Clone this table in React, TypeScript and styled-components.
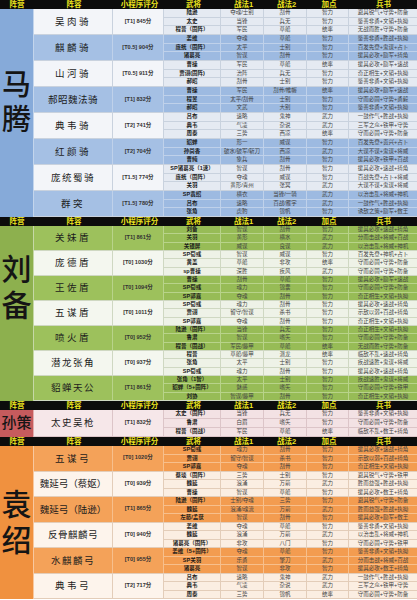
import React from 'react';
import styled, { createGlobalStyle } from 'styled-components';

const GlobalStyle = createGlobalStyle`
  html, body {
    margin: 0;
    padding: 0;
    background: #ffffff;
  }
  body {
    font-family: 'Noto Sans CJK SC', 'Noto Sans', sans-serif;
    color: #222;
  }
`;

type Row = [string, string, string, string, string];

interface Group {
  name: string;
  score: string;
  rows: Row[];
}

interface Faction {
  title: string[];
  titleSize: number;
  titleLift: number;
  groupHeight: number;
  side: string;
  light: string;
  lightCell: string;
  dark: string;
  darkCell: string;
  lightLine: string;
  darkLine: string;
  startDark: boolean;
  groups: Group[];
}

const factions: Faction[] = [
  {
    title: ['马', '腾'],
    titleSize: 29,
    titleLift: 20,
    groupHeight: 26,
    side: '#86aad9',
    light: '#f3f5f9',
    lightCell: '#e5eaf2',
    dark: '#a5c0e4',
    darkCell: '#9dbae1',
    lightLine: '#c9d2de',
    darkLine: '#bfd1ea',
    startDark: false,
    groups: [
      {
        name: '吴肉骑',
        score: '[T1] 845分',
        rows: [
          ['陆逊', '夺魂/士别', '刮骨', '智力', '避其锐气+守势+防备'],
          ['太史', '当锋', '兵无', '智力', '鉴善非勇+文韬+执拗'],
          ['程普（固阵）', '军民', '草船', '统率', '无战而胜+守势+防备'],
        ],
      },
      {
        name: '麒麟骑',
        score: '[T0.5] 904分',
        rows: [
          ['姜维', '夺魂', '草船', '智力', '鉴善非勇+胜战+执拗'],
          ['庞统（固阵）', '太平', '士别', '智力', '百发先登+鬼谋+占卜'],
          ['诸葛亮', '智谋', '刮骨', '智力', '援其必攻+励军+掎角'],
        ],
      },
      {
        name: '山河骑',
        score: '[T0.5] 911分',
        rows: [
          ['曹操', '军民', '草船', '统率', '援其必攻+励军+速战'],
          ['贾诩(固阵)', '治阵', '兵无', '智力', '奇正相生+文韬+执拗'],
          ['郝昭', '刮骨', '士别', '智力', '鉴善非勇+文韬+执拗'],
        ],
      },
      {
        name: '郝昭魏法骑',
        score: '[T1] 832分',
        rows: [
          ['曹操', '军民', '刮骨/帷幄', '统率', '援其必攻+励军+速战'],
          ['程昱', '太平/刮骨', '士别', '智力', '守而必固+守势+勇毅'],
          ['郝昭', '文武', '大别', '智力', '鉴善非勇+文韬+执拗'],
        ],
      },
      {
        name: '典韦骑',
        score: '[T2] 741分',
        rows: [
          ['吕布', '速略', '鬼神', '武力', '一鼓作气+胜战+执拗'],
          ['典韦', '气凌', '杂说', '武力', '三军之众+铁甲+守势'],
          ['周泰', '三势', '西凉', '统率', '守而必固+守势+防备'],
        ],
      },
      {
        name: '红颜骑',
        score: '[T2] 704分',
        rows: [
          ['貂蝉', '形一', '威谋', '智力', '百发先登+贵兴+占卜'],
          ['孙尚香', '破水/破军/斩刀', '西凉', '武力', '大谋不谋+鬼谋+将威'],
          ['曹纯', '象兵', '刮骨', '智力', '援其必攻+铁甲+百战'],
        ],
      },
      {
        name: '庞统蜀骑',
        score: '[T1.5] 774分',
        rows: [
          ['SP诸葛亮（1速）', '智谋', '刮骨', '智力', '援其必攻+速战+掎角'],
          ['庞统（固阵）', '夺魂', '威谋', '智力', '百战先登+占卜+将威'],
          ['关羽', '黄形/青州', '张冥', '武力', '大谋不谋+鬼谋+将威'],
        ],
      },
      {
        name: '群突',
        score: '[T1.5] 780分',
        rows: [
          ['SP袁绍', '横衣', '当锋/一骑', '武力', '以治击乱+将威+神机'],
          ['吕布', '速略', '百战/雁字', '武力', '一鼓作气+胜战+执拗'],
          ['张角', '虎豹', '锦帆', '智力', '诱敌之策+励军+数王'],
        ],
      },
    ],
  },
  {
    title: ['刘', '备'],
    titleSize: 30,
    titleLift: 52,
    groupHeight: 25,
    side: '#8db04e',
    light: '#f4f7ef',
    lightCell: '#eef2e7',
    dark: '#9dc15c',
    darkCell: '#97bc56',
    lightLine: '#cfd8c2',
    darkLine: '#b8d38a',
    startDark: true,
    groups: [
      {
        name: '关妹盾',
        score: '[T1] 861分',
        rows: [
          ['刘备', '智谋', '刮骨', '智力', '援其必攻+速战+掎角'],
          ['关羽', '黄形', '横水', '武力', '分而击战+将威+百战'],
          ['关银屏', '威谋', '良谋', '武力', '以治击乱+将威+神机'],
        ],
      },
      {
        name: '庞德盾',
        score: '[T0] 1030分',
        rows: [
          ['SP荀彧', '智谋', '威谋', '智力', '百发先登+神机+占卜'],
          ['黄盖', '草船', '非攻', '统率', '守而必固+守势+防备'],
          ['sp曹操', '深胜', '疾风', '武力', '守而必固+守势+防备'],
        ],
      },
      {
        name: '王佐盾',
        score: '[T0] 1094分',
        rows: [
          ['曹操', '刮骨', '草船', '智力', '援其必攻+励军+速战'],
          ['SP荀彧', '魂力', '锦囊', '智力', '守而必固+守势+防备'],
          ['SP郭嘉', '夺魂', '刮骨', '智力', '奇正相生+文韬+执拗'],
        ],
      },
      {
        name: '五谋盾',
        score: '[T0] 1011分',
        rows: [
          ['SP荀彧', '魂力', '刮骨', '智力', '援其必攻+速战+掎角'],
          ['贾诩', '留守/智谋', '杀书', '智力', '示敌以弱+百战+掎角'],
          ['SP郭嘉', '夺魂', '刮骨', '智力', '奇正相生+文韬+执拗'],
        ],
      },
      {
        name: '喷火盾',
        score: '[T0] 952分',
        rows: [
          ['陆逊（固阵）', '当锋', '兵无', '智力', '奇正相生+文韬+执拗'],
          ['鲁肃', '智谋', '嗜矢', '智力', '守而必固+守势+防备'],
          ['程普（固战）', '军民/藤甲', '草船', '统率', '无战而胜+守势+防备'],
        ],
      },
      {
        name: '潜龙张角',
        score: '[T0] 937分',
        rows: [
          ['程普', '草船/藤甲', '潜龙', '统率', '临敌不乱+速战+掎角'],
          ['张角', '太平', '士别', '智力', '疾战速胜+鬼谋+将威'],
          ['SP荀彧', '魂力', '刮骨', '智力', '援其必攻+速战+掎角'],
        ],
      },
      {
        name: '貂蝉天公',
        score: '[T1] 861分',
        rows: [
          ['张角（1智）', '太平', '士别', '智力', '疾战速胜+鬼谋+将威'],
          ['貂蝉（5+固阵）', '魅惑', '嗜矢', '智力', '守而必固+守势+铁甲'],
          ['刘协', '智谋/藤甲', '刮骨', '智力', '奇正相生+文韬+执拗'],
        ],
      },
    ],
  },
  {
    title: ['孙策'],
    titleSize: 15,
    titleLift: 0,
    groupHeight: 27,
    side: '#c65b5d',
    light: '#f6e7e9',
    lightCell: '#f3e2e4',
    dark: '#f6e7e9',
    darkCell: '#f3e2e4',
    lightLine: '#dcc5c8',
    darkLine: '#dcc5c8',
    startDark: false,
    groups: [
      {
        name: '太史吴枪',
        score: '[T1] 832分',
        rows: [
          ['太史（固阵）', '当锋', '兵无', '智力', '鉴善非勇+文韬+执拗'],
          ['鲁肃', '白眉', '嗜矢', '智力', '守而必固+守势+防备'],
          ['程普（固战）', '军民', '草船', '统率', '临敌不乱+数王+掎角'],
        ],
      },
    ],
  },
  {
    title: ['袁', '绍'],
    titleSize: 30,
    titleLift: 0,
    groupHeight: 25.5,
    side: '#f0913f',
    light: '#fdf4ec',
    lightCell: '#fbeee2',
    dark: '#f4a259',
    darkCell: '#f39c50',
    lightLine: '#e3cdb9',
    darkLine: '#f7bf8c',
    startDark: true,
    groups: [
      {
        name: '五谋弓',
        score: '[T0] 1020分',
        rows: [
          ['SP荀彧', '魂力', '刮骨', '智力', '援其必攻+速战+掎角'],
          ['贾诩', '留守/智谋', '杀书', '智力', '示敌以弱+百战+掎角'],
          ['SP郭嘉', '夺魂', '刮骨', '智力', '奇正相生+文韬+执拗'],
        ],
      },
      {
        name: '魏延弓（蔡妪）',
        score: '[T0] 939分',
        rows: [
          ['蔡琰（固阵）', '三势', '士别', '智力', '避其锐气+守势+铁甲'],
          ['魏延', '浪涌', '万箭', '武力', '胜而益强+胜战+执拗'],
          ['曹操', '智谋', '草船', '智力', '援其必攻+数王+掎角'],
        ],
      },
      {
        name: '魏延弓（陆逊）',
        score: '[T1] 865分',
        rows: [
          ['陆逊（固阵）', '士别/夺魂', '三势', '智力', '避其锐气+守势+防备'],
          ['魏延', '浪涌/魂流', '万箭', '武力', '胜而益强+胜战+执拗'],
          ['左慈/孟获', '智谋', '刮骨', '智力', '援其必攻+励军+数王'],
        ],
      },
      {
        name: '反骨麒麟弓',
        score: '[T0] 940分',
        rows: [
          ['姜维', '夺魂', '草船', '智力', '鉴善非勇+文韬+执拗'],
          ['魏延', '浪涌', '万箭', '武力', '以治击乱+将威+神机'],
          ['诸葛亮（固阵）', '非攻', '八门', '智力', '守而必固+守势+铁甲'],
        ],
      },
      {
        name: '水麒麟弓',
        score: '[T0] 955分',
        rows: [
          ['姜维（5+固阵）', '夺魂', '草船', '智力', '鉴善非勇+文韬+执拗'],
          ['SP关羽', '乐勇', '擎刀', '武力', '分而击战+将威+百战'],
          ['诸葛亮', '智谋', '非攻', '智力', '援其必攻+数王+掎角'],
        ],
      },
      {
        name: '典韦弓',
        score: '[T2] 717分',
        rows: [
          ['吕布', '速略', '鬼神', '武力', '一鼓作气+胜战+执拗'],
          ['典韦', '气凌', '杂说', '武力', '三军之众+铁甲+守势'],
          ['周泰', '三势', '锦帆', '统率', '守而必固+守势+防备'],
        ],
      },
    ],
  },
];

const headers = ['阵营', '阵容', '小程序评分', '武将', '战法1', '战法2', '加点', '兵书'];

// short names are spread out in the picture, long ones sit tight
const nameSpacing = (name: string) => (name.length <= 3 ? 2.5 : name.length === 4 ? 1.5 : name.length === 5 ? 0.5 : 0);

// latin face first keeps the text boxes inside their rows; CJK glyphs fall through to Noto
const tightFont = `'Liberation Sans', 'Noto Sans CJK SC', sans-serif`;

const Sheet = styled.div`
  width: 417px;
  display: flex;
  flex-direction: column;
`;

const HeaderRow = styled.div`
  display: grid;
  grid-template-columns: 34px 80px 51px 57px 43px 43px 42px 1fr;
  height: 9px;
  background: #0c0c0c;
  overflow: hidden;
`;

const HeaderCell = styled.div`
  color: #ece41e;
  font-family: ${tightFont};
  font-size: 7.5px;
  font-weight: 700;
  line-height: 9px;
  text-align: center;
  white-space: nowrap;
`;

const SectionBody = styled.div`
  display: flex;
`;

const Sidebar = styled.div<{ $bg: string; $size: number; $lift: number }>`
  width: 34px;
  flex-shrink: 0;
  background: ${(p) => p.$bg};
  display: flex;
  flex-direction: column;
  align-items: center;
  justify-content: center;
  gap: 3px;
  padding-bottom: ${(p) => p.$lift}px;
  box-sizing: border-box;
  border-right: 1px solid rgba(255, 255, 255, 0.5);
  font-family: ${tightFont};
  font-size: ${(p) => p.$size}px;
  font-weight: 500;
  line-height: 1.1;
  color: #151515;
  white-space: nowrap;
`;

const Groups = styled.div`
  flex: 1;
  display: flex;
  flex-direction: column;
`;

const GroupBlock = styled.div<{ $h: number; $bg: string; $line: string }>`
  display: grid;
  grid-template-columns: 79px 51px 1fr;
  height: ${(p) => p.$h}px;
  background: ${(p) => p.$bg};
  border-bottom: 1px solid ${(p) => p.$line};
  box-sizing: border-box;
  overflow: hidden;
`;

const NameCell = styled.div<{ $line: string; $spacing: number }>`
  display: flex;
  align-items: center;
  justify-content: center;
  border-right: 1px solid ${(p) => p.$line};
  font-size: 9.5px;
  line-height: 1.2;
  letter-spacing: ${(p) => p.$spacing}px;
  color: #1c1c1c;
  white-space: nowrap;
  overflow: hidden;
`;

const ScoreCell = styled.div<{ $line: string }>`
  display: flex;
  align-items: center;
  justify-content: center;
  border-right: 1px solid ${(p) => p.$line};
  font-family: ${tightFont};
  font-size: 5.6px;
  line-height: 1;
  font-weight: 700;
  color: #333;
  white-space: nowrap;
`;

const Rows = styled.div`
  display: flex;
  flex-direction: column;
  min-height: 0;
`;

const RowLine = styled.div<{ $bg: string; $line: string }>`
  flex: 1;
  min-height: 0;
  display: grid;
  grid-template-columns: 57px 43px 43px 42px 1fr;
  background: ${(p) => p.$bg};
  &:not(:last-child) {
    border-bottom: 1px solid ${(p) => p.$line};
  }
`;

const Cell = styled.div<{ $line: string; $strong?: boolean }>`
  display: flex;
  align-items: center;
  justify-content: center;
  min-height: 0;
  border-right: 1px solid ${(p) => p.$line};
  font-family: ${tightFont};
  font-size: 5.5px;
  line-height: 1;
  font-weight: ${(p) => (p.$strong ? 700 : 400)};
  color: ${(p) => (p.$strong ? '#1a1a1a' : '#444')};
  white-space: nowrap;
  overflow: hidden;
  &:last-child {
    border-right: none;
  }
`;

function FactionSection({ faction }: { faction: Faction }) {
  return (
    <>
      <HeaderRow>
        {headers.map((h) => (
          <HeaderCell key={h}>{h}</HeaderCell>
        ))}
      </HeaderRow>
      <SectionBody>
        <Sidebar $bg={faction.side} $size={faction.titleSize} $lift={faction.titleLift}>
          {faction.title.map((t) => (
            <span key={t}>{t}</span>
          ))}
        </Sidebar>
        <Groups>
          {faction.groups.map((g, i) => {
            const dark = faction.startDark ? i % 2 === 0 : i % 2 === 1;
            const bg = dark ? faction.dark : faction.light;
            const cellBg = dark ? faction.darkCell : faction.lightCell;
            const line = dark ? faction.darkLine : faction.lightLine;
            return (
              <GroupBlock key={g.name} $h={faction.groupHeight} $bg={bg} $line={faction.lightLine}>
                <NameCell $line={line} $spacing={nameSpacing(g.name)}>
                  {g.name}
                </NameCell>
                <ScoreCell $line={line}>{g.score}</ScoreCell>
                <Rows>
                  {g.rows.map((r, j) => (
                    <RowLine key={j} $bg={cellBg} $line={line}>
                      {r.map((c, k) => (
                        <Cell key={k} $line={line} $strong={k === 0}>
                          {c}
                        </Cell>
                      ))}
                    </RowLine>
                  ))}
                </Rows>
              </GroupBlock>
            );
          })}
        </Groups>
      </SectionBody>
    </>
  );
}

export default function App() {
  return (
    <>
      <GlobalStyle />
      <Sheet>
        {factions.map((f) => (
          <FactionSection key={f.title.join('')} faction={f} />
        ))}
      </Sheet>
    </>
  );
}
